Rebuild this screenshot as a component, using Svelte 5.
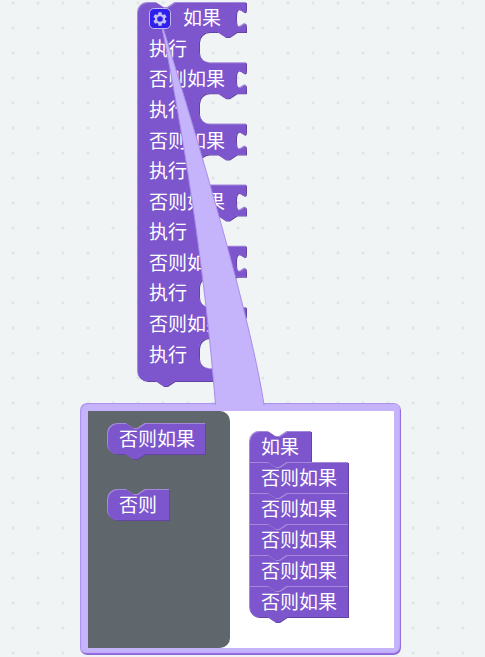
<script>
  const S = 1.25;
  const NOTCH = 15 * S;
  const R = 8 * S;

  // Each branch is a condition row followed by a statement row.
  const branches = ['如果', '否则如果', '否则如果', '否则如果', '否则如果', '否则如果'];
  const stack = ['如果', '否则如果', '否则如果', '否则如果', '否则如果', '否则如果'];

  const topEdge = (round) =>
    (round ? `M0 ${R} A${R} ${R} 0 0 1 ${R} 0` : 'M0 0') +
    ` H${NOTCH} l${6 * S} ${4 * S} h${3 * S} l${6 * S} ${-4 * S}`;

  const bottomEdge = (h, round, tab) =>
    (tab ? ` H${NOTCH + 15 * S} l${-6 * S} ${4 * S} h${-3 * S} l${-6 * S} ${-4 * S}` : '') +
    (round ? ` H${R} A${R} ${R} 0 0 1 0 ${h - R} Z` : ' H0 Z');

  function simplePath(w, h, roundTop, roundBottom, tab) {
    return topEdge(roundTop) + ` H${w} V${h}` + bottomEdge(h, roundBottom, tab);
  }

  function branchPath(w, h, inner, count, period) {
    let d = topEdge(true) + ` H${w}`;
    for (let i = 0; i < count; i++) {
      const y = i * period;
      const slot = y + period / 2 - 0.6;
      d += ` V${y + 5 * S} c0 ${10 * S} ${-8 * S} ${-8 * S} ${-8 * S} ${7.5 * S} s${8 * S} ${-2.5 * S} ${8 * S} ${7.5 * S}`;
      d += ` V${slot} H${inner + NOTCH + 15 * S} l${-6 * S} ${4 * S} h${-3 * S} l${-6 * S} ${-4 * S}`;
      d += ` H${inner + R} a${R} ${R} 0 0 0 ${-R} ${R} V${y + period - 1 - R} a${R} ${R} 0 0 0 ${R} ${R} H${w}`;
    }
    return d + ` V${h}` + bottomEdge(h, true, true);
  }
</script>

{#snippet shape(id, d)}
  <svg class="shape" aria-hidden="true">
    <clipPath {id}><path {d} /></clipPath>
    <path {d} class="dark" transform="translate(1 1)" />
    <path {d} class="light" />
    <g clip-path="url(#{id})"><path {d} class="main" transform="translate(1 1)" /></g>
  </svg>
{/snippet}

<main class="workspace">
  <section class="block branch">
    {@render shape('branch', branchPath(109, 379, 62, 6, 61.2))}
    <div class="rows">
      {#each branches as label, i}
        <div class="row" class:first={i === 0}><span>{label}</span></div>
        <div class="row"><span>执行</span></div>
      {/each}
    </div>
  </section>

  <section class="bubble">
    <div class="flyout">
      <div class="block wide">
        {@render shape('fly-elseif', simplePath(98, 31, true, true, true))}
        <span>否则如果</span>
      </div>
      <div class="block narrow">
        {@render shape('fly-else', simplePath(62, 31, true, true, false))}
        <span>否则</span>
      </div>
    </div>
    <div class="stack">
      {#each stack as label, i}
        <div class="block">
          {@render shape(`stack-${i}`, simplePath(i ? 99 : 62, 31, i === 0, i === stack.length - 1, true))}
          <span>{label}</span>
        </div>
      {/each}
    </div>
  </section>

  <svg class="tail" aria-hidden="true">
    <path d="M215.500 405 C205 270 183 130 160 18 C206 165 253 330 264 405" />
  </svg>

  <button class="gear" aria-label="设置">
    <svg viewBox="0 0 24 24" aria-hidden="true">
      <path d="M19.43 12.98c.04-.32.07-.64.07-.98s-.03-.66-.07-.98l2.11-1.65c.19-.15.24-.42.12-.64l-2-3.46c-.12-.22-.39-.3-.61-.22l-2.49 1c-.52-.4-1.08-.73-1.69-.98l-.38-2.65C14.46 2.18 14.25 2 14 2h-4c-.25 0-.46.18-.49.42l-.38 2.65c-.61.25-1.17.59-1.69.98l-2.49-1c-.23-.09-.49 0-.61.22l-2 3.46c-.13.22-.07.49.12.64l2.11 1.65c-.04.32-.07.65-.07.98s.03.66.07.98l-2.11 1.65c-.19.15-.24.42-.12.64l2 3.46c.12.22.39.3.61.22l2.49-1c.52.4 1.08.73 1.69.98l.38 2.65c.03.24.24.42.49.42h4c.25 0 .46-.18.49-.42l.38-2.65c.61-.25 1.17-.59 1.69-.98l2.49 1c.23.09.49 0 .61-.22l2-3.46c.12-.22.07-.49-.12-.64l-2.11-1.65zM12 16.2a4.2 4.2 0 1 1 0-8.4 4.2 4.2 0 0 1 0 8.4z" />
    </svg>
  </button>
</main>

<style>
  :global(body) { margin: 0; }

  .workspace {
    position: relative;
    min-height: 100vh;
    overflow: hidden;
    background-color: #f0f4f5;
    background-image: radial-gradient(circle at 13px 3px, #e0e4e6 1px, transparent 2px);
    background-size: 25px 25px;
    color: #fff;
    font: 19px/30px "Noto Sans CJK SC", sans-serif;
  }

  .block {
    position: relative;
    box-sizing: border-box;
    height: 31px;
    padding-left: 12px;
  }
  .block span { position: relative; white-space: nowrap; }

  .shape {
    position: absolute;
    left: 0;
    top: 0;
    width: 100%;
    height: 100%;
    overflow: visible;
  }
  .dark { fill: #6444a3; }
  .light { fill: #a489db; }
  .main { fill: #7d55cc; }

  .branch {
    position: absolute;
    left: 137px;
    top: 2px;
    width: 109px;
    height: 379px;
  }
  .rows {
    display: flex;
    flex-direction: column;
    height: 367px;
  }
  .row { flex: 1; display: flex; align-items: center; }
  .first { padding-left: 34px; }

  .tail {
    position: absolute;
    left: 0;
    top: 0;
    width: 100%;
    height: 100%;
    pointer-events: none;
  }
  .tail path { fill: #c5b3fb; stroke: #a78de8; stroke-width: 1; }

  .gear {
    position: absolute;
    left: 149px;
    top: 8px;
    display: grid;
    place-items: center;
    width: 22px;
    height: 21px;
    padding: 0;
    border: 1px solid #c5b5f0;
    border-radius: 5px;
    background: #2f20ee;
  }
  .gear svg { width: 16px; height: 16px; fill: #c3c0f5; }

  .bubble {
    position: absolute;
    left: 80px;
    top: 403px;
    box-sizing: border-box;
    display: flex;
    width: 321px;
    height: 252px;
    padding: 8px 7px 7px 8px;
    border-radius: 7px;
    background: linear-gradient(#fff, #fff) content-box, #c5b3fb;
    box-shadow: inset 1px 1px 1px #ab90ee, inset -1px -2px 1px #9068dc;
  }
  .flyout {
    box-sizing: border-box;
    width: 142px;
    padding: 12px 0 0 19px;
    border-radius: 0 10px 10px 0;
    background: #5f676c;
  }
  .wide { width: 98px; }
  .narrow { width: 62px; margin-top: 35px; }
  .stack { width: 99px; margin: 20px 0 0 19px; }
</style>
